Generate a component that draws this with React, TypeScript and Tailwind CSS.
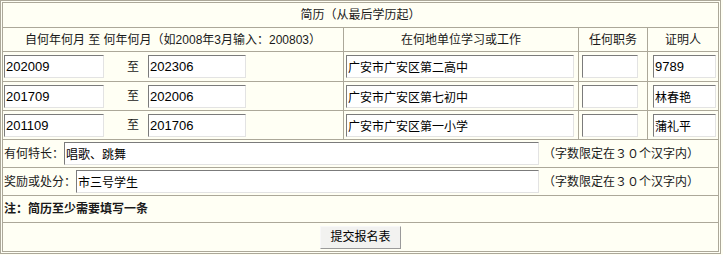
import React from "react";

const ROWS = [
  { from: "202009", to: "202306", place: "广安市广安区第二高中", duty: "", witness: "9789" },
  { from: "201709", to: "202006", place: "广安市广安区第七初中", duty: "", witness: "林春艳" },
  { from: "201109", to: "201706", place: "广安市广安区第一小学", duty: "", witness: "蒲礼平" },
];

const inputCls =
  "h-[23px] bg-white border border-t-[#7b7b7b] border-l-[#7b7b7b] border-b-[#e3e3e3] border-r-[#e3e3e3] px-px text-black outline-none";

export default function App() {
  return (
    <div
      className="min-h-screen bg-[#fffff4] text-[12px] text-[#1a1a1a]"
      style={{ fontFamily: '"Liberation Sans", "Noto Sans CJK SC", sans-serif' }}
    >
      <div className="w-[721px] border border-[#aca899] p-px">
        <table className="w-full border-collapse border border-[#aca899] table-fixed">
          <colgroup>
            <col className="w-[341px]" />
            <col className="w-[235px]" />
            <col className="w-[69px]" />
            <col />
          </colgroup>
          <tbody>
            <tr className="h-[25px]">
              <td colSpan={4} className="border border-[#aca899] text-center">
                简历（从最后学历起）
              </td>
            </tr>
            <tr className="h-[24px]">
              <td className="border border-[#aca899] text-center">
                自何年何月 至 何年何月（如2008年3月输入：200803）
              </td>
              <td className="border border-[#aca899] text-center">在何地单位学习或工作</td>
              <td className="border border-[#aca899] text-center">任何职务</td>
              <td className="border border-[#aca899] text-center">证明人</td>
            </tr>
            {ROWS.map((r, i) => (
              <tr key={i} className={i === 0 ? "h-[30px]" : "h-[29px]"}>
                <td className="border border-[#aca899] px-px">
                  <div className="flex items-center">
                    <input readOnly value={r.from} className={`${inputCls} w-[100px] text-[13px]`} />
                    <span className="ml-[23px] mr-[9px]">至</span>
                    <input readOnly value={r.to} className={`${inputCls} w-[98px] text-[13px]`} />
                  </div>
                </td>
                <td className="border border-[#aca899] px-[2px]">
                  <input readOnly value={r.place} className={`${inputCls} w-[228px] text-[12px]`} />
                </td>
                <td className="border border-[#aca899] px-[3px]">
                  <input readOnly value={r.duty} className={`${inputCls} w-[56px] text-[12px]`} />
                </td>
                <td className="border border-[#aca899] pl-[5px] pr-px">
                  <input
                    readOnly
                    value={r.witness}
                    className={`${inputCls} w-[63px] ${/^\d+$/.test(r.witness) ? "text-[13px]" : "text-[12px]"}`}
                  />
                </td>
              </tr>
            ))}
            <tr className="h-[28px]">
              <td colSpan={4} className="border border-[#aca899] px-px">
                <div className="flex items-center">
                  <span>有何特长：</span>
                  <input readOnly value="唱歌、跳舞" className={`${inputCls} w-[475px] text-[12px]`} />
                  <span className="ml-[4px]">（字数限定在３０个汉字内）</span>
                </div>
              </td>
            </tr>
            <tr className="h-[28px]">
              <td colSpan={4} className="border border-[#aca899] px-px">
                <div className="flex items-center">
                  <span>奖励或处分：</span>
                  <input readOnly value="市三号学生" className={`${inputCls} w-[463px] text-[12px]`} />
                  <span className="ml-[4px]">（字数限定在３０个汉字内）</span>
                </div>
              </td>
            </tr>
            <tr className="h-[27px]">
              <td colSpan={4} className="border border-[#aca899] px-px font-bold">
                注：简历至少需要填写一条
              </td>
            </tr>
            <tr className="h-[29px]">
              <td colSpan={4} className="border border-[#aca899] text-center">
                <button className="h-[23px] px-[9px] bg-[#f2f2f0] border border-t-[#f8f8f8] border-l-[#f8f8f8] border-b-[#9a9a9a] border-r-[#9a9a9a] text-[12px] text-black">
                  提交报名表
                </button>
              </td>
            </tr>
          </tbody>
        </table>
      </div>
    </div>
  );
}
